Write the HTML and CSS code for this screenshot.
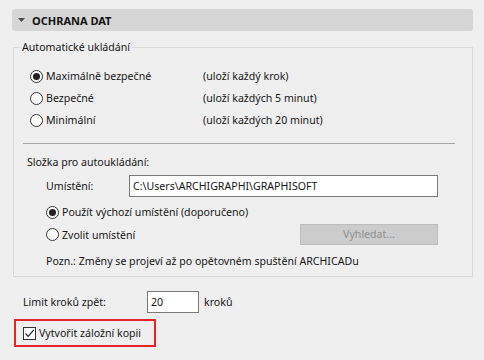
FILE: index.html
```html
<!DOCTYPE html>
<html lang="cs">
<head>
<meta charset="utf-8">
<link rel="stylesheet" href="styles.css">
</head>
<body>
<div class="page">
  <div class="header">
    <svg class="tri" width="7" height="4" viewBox="0 0 7 4"><polygon points="0,0 7,0 3.5,4" fill="#4a4a4a"/></svg>
    <span class="title">OCHRANA DAT</span>
  </div>

  <fieldset class="group">
    <legend class="legend">Automatické ukládání</legend>
    <div class="radios">
      <div class="row">
        <span class="radio checked"></span><span class="rlabel">Maximálně bezpečné</span><span class="desc">(uloží každý krok)</span>
      </div>
      <div class="row">
        <span class="radio"></span><span class="rlabel">Bezpečné</span><span class="desc">(uloží každých 5 minut)</span>
      </div>
      <div class="row">
        <span class="radio"></span><span class="rlabel">Minimální</span><span class="desc">(uloží každých 20 minut)</span>
      </div>
    </div>
    <div class="sep"></div>
    <div class="folder">
      <div class="ftitle">Složka pro autoukládání:</div>
      <div class="loc">
        <span class="loclabel">Umístění:</span>
        <div class="field path">C:\Users\ARCHIGRAPHI\GRAPHISOFT</div>
      </div>
      <div class="row sub first">
        <span class="radio checked"></span><span>Použít výchozí umístění (doporučeno)</span>
      </div>
      <div class="row sub choose">
        <span class="radio"></span><span class="grow">Zvolit umístění</span>
        <div class="btn">Vyhledat...</div>
      </div>
      <div class="note">Pozn.: Změny se projeví až po opětovném spuštění ARCHICADu</div>
    </div>
  </fieldset>

  <div class="limit">
    <span class="limlabel">Limit kroků zpět:</span>
    <div class="field num">20</div>
    <span class="unit">kroků</span>
  </div>

  <div class="backup">
    <span class="check"><svg width="11" height="11" viewBox="0 0 11 11"><polyline points="1.5,5.5 4.2,8.3 9.8,1.8" fill="none" stroke="#222" stroke-width="1.2"/></svg></span>
    <span>Vytvořit záložní kopii</span>
  </div>
</div>
</body>
</html>
```
FILE: styles.css
```css
* { box-sizing: border-box; }
html, body { margin: 0; padding: 0; }
body {
  background: #efefef;
  font-family: "Noto Sans", "Open Sans", sans-serif;
  font-size: 10.6px;
  color: #161616;
  width: 484px;
  height: 360px;
  overflow: hidden;
}
.page { padding-top: 9px; }
.header {
  margin: 0 11px 0 12px;
  height: 22px;
  background: #d6d6d6;
  border-radius: 3px;
  display: flex;
  align-items: center;
  padding-left: 6px;
}
.tri { margin-right: 7px; }
.title { font-weight: bold; color: #111; font-size: 11px; }

.group {
  margin: 8px 0 0 13px;
  width: 460px;
  border: 1px solid #d9d9d9;
  padding: 0;
  min-width: 0;
}
.legend {
  margin-left: 6px;
  padding: 0 2px;
  line-height: 16px;
}
.radios { padding: 10px 0 0 16px; }
.row { display: flex; align-items: center; height: 22px; white-space: nowrap; }
.radio {
  width: 13px; height: 13px;
  border: 1px solid #333;
  border-radius: 50%;
  background: #fff;
  margin-right: 3px;
  display: flex; align-items: center; justify-content: center;
  flex: none;
}
.radio.checked::after {
  content: "";
  width: 7px; height: 7px;
  border-radius: 50%;
  background: #222;
}
.rlabel { width: 157px; }
.sep {
  height: 1px;
  background: #a6a6a6;
  margin: 12px 17px 0 9px;
}
.folder { padding: 8px 0 5px 13px; }
.ftitle { height: 20px; line-height: 20px; }
.loc { display: flex; align-items: center; margin-top: 3px; padding-left: 19px; }
.loclabel { width: 83px; }
.field {
  background: #fff;
  border: 1px solid #7a7a7a;
  height: 22px;
  line-height: 20px;
  padding-left: 3px;
  white-space: nowrap;
}
.path { width: 309px; }
.sub { padding-left: 19px; }
.first { margin-top: 4px; }
.choose { height: 23px; }
.grow { flex: 1; }
.btn {
  width: 138px; height: 21px;
  background: #cccccc;
  border: 1px solid #bdbdbd;
  color: #8f8f8f;
  text-align: center;
  line-height: 19px;
  margin-right: 34px;
}
.note { height: 20px; line-height: 20px; margin-top: 5px; padding-left: 19px; white-space: nowrap; }

.limit { display: flex; align-items: center; margin: 14px 0 0 23px; }
.limlabel { width: 124px; }
.num { width: 52px; }
.unit { margin-left: 5px; }

.backup {
  display: flex;
  align-items: center;
  margin: 6px 0 0 14px;
  width: 142px; height: 28px;
  border: 2px solid #e8222c;
  padding-left: 7px;
  white-space: nowrap;
}
.check {
  width: 13px; height: 13px;
  border: 1px solid #333;
  background: #fff;
  margin-right: 3px;
  display: flex; align-items: center; justify-content: center;
  flex: none;
}
```
